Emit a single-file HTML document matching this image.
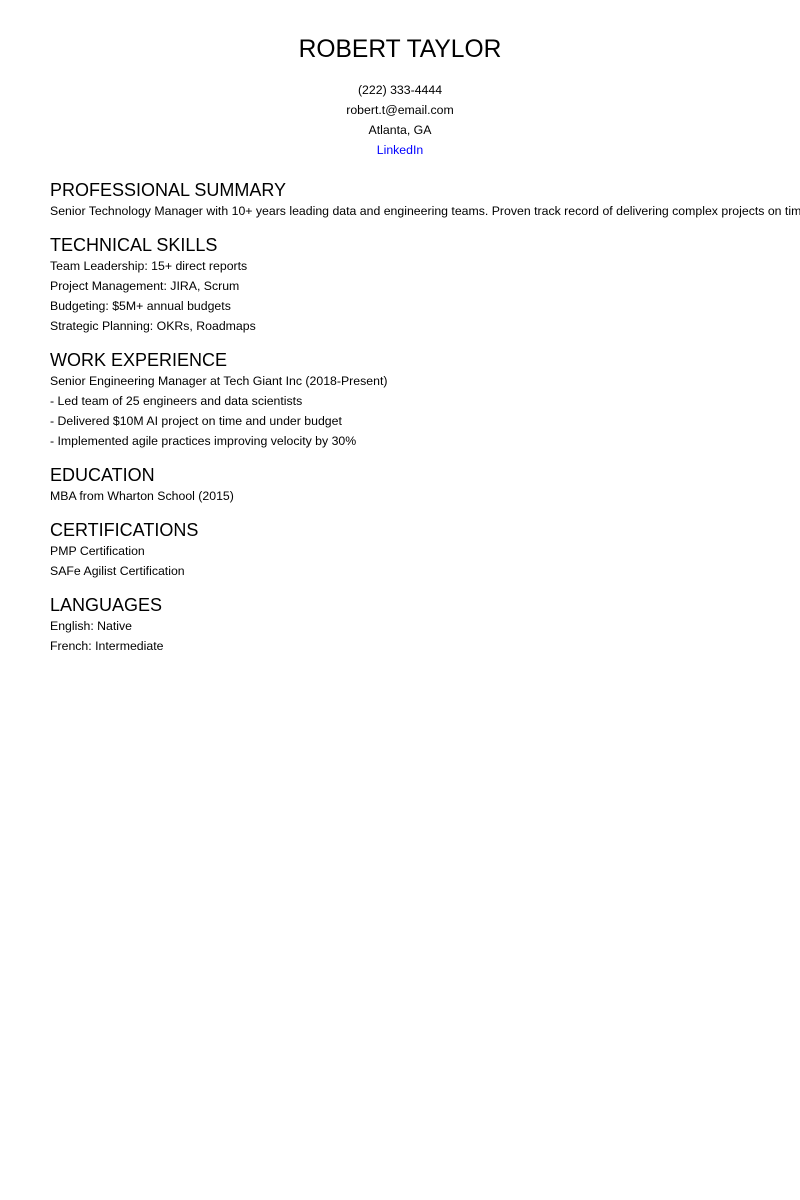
<!DOCTYPE html>
<html><head><meta charset="utf-8"><style>
html,body{margin:0;padding:0;background:#fff;width:800px;height:1200px;overflow:hidden}
body{font-family:"Liberation Sans",Arial,sans-serif;color:#000}
.wrap{width:800px;height:1200px;overflow:hidden;position:relative;padding-left:50px;box-sizing:border-box}
h1{font-size:24.6px;font-weight:normal;line-height:28px;margin:36px 0 16px -50px;text-align:center;width:800px}
.contact{margin-left:-50px;width:800px;text-align:center;font-size:12.3px;line-height:20px}
.contact a{color:#00f;text-decoration:none}
h2{font-size:18px;font-weight:normal;line-height:22px;margin:13px 0 0}
h2.first{margin-top:19px}
p{margin:0;font-size:12.3px;line-height:20px;white-space:nowrap;overflow:hidden;width:750px}
</style></head><body><div class="wrap">
<h1>ROBERT TAYLOR</h1>
<div class="contact">(222) 333-4444<br>robert.t@email.com<br>Atlanta, GA<br><a>LinkedIn</a></div>
<h2 class="first">PROFESSIONAL SUMMARY</h2>
<p>Senior Technology Manager with 10+ years leading data and engineering teams. Proven track record of delivering complex projects on time and under budget.</p>
<h2>TECHNICAL SKILLS</h2>
<p>Team Leadership: 15+ direct reports</p>
<p>Project Management: JIRA, Scrum</p>
<p>Budgeting: $5M+ annual budgets</p>
<p>Strategic Planning: OKRs, Roadmaps</p>
<h2>WORK EXPERIENCE</h2>
<p>Senior Engineering Manager at Tech Giant Inc (2018-Present)</p>
<p>- Led team of 25 engineers and data scientists</p>
<p>- Delivered $10M AI project on time and under budget</p>
<p>- Implemented agile practices improving velocity by 30%</p>
<h2>EDUCATION</h2>
<p>MBA from Wharton School (2015)</p>
<h2>CERTIFICATIONS</h2>
<p>PMP Certification</p>
<p>SAFe Agilist Certification</p>
<h2>LANGUAGES</h2>
<p>English: Native</p>
<p>French: Intermediate</p>
</div></body></html>
